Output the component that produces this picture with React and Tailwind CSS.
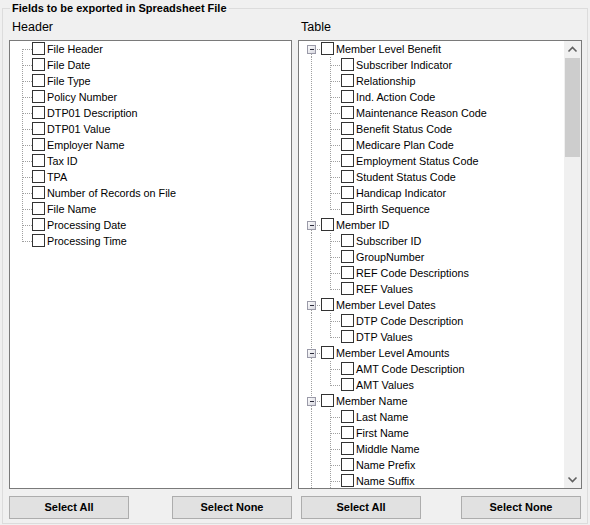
import React from "react";

const leftItems = [
  "File Header",
  "File Date",
  "File Type",
  "Policy Number",
  "DTP01 Description",
  "DTP01 Value",
  "Employer Name",
  "Tax ID",
  "TPA",
  "Number of Records on File",
  "File Name",
  "Processing Date",
  "Processing Time",
];

const rightTree = [
  {
    label: "Member Level Benefit",
    children: [
      "Subscriber Indicator",
      "Relationship",
      "Ind. Action Code",
      "Maintenance Reason Code",
      "Benefit Status Code",
      "Medicare Plan Code",
      "Employment Status Code",
      "Student Status Code",
      "Handicap Indicator",
      "Birth Sequence",
    ],
  },
  {
    label: "Member ID",
    children: ["Subscriber ID", "GroupNumber", "REF Code Descriptions", "REF Values"],
  },
  { label: "Member Level Dates", children: ["DTP Code Description", "DTP Values"] },
  { label: "Member Level Amounts", children: ["AMT Code Description", "AMT Values"] },
  {
    label: "Member Name",
    children: ["Last Name", "First Name", "Middle Name", "Name Prefix", "Name Suffix"],
    more: true,
  },
];

const DOT = { stroke: "#a0a0a0", strokeWidth: 1, strokeDasharray: "1 1", shapeRendering: "crispEdges" };

function CheckBox() {
  return <div className="w-[13px] h-[13px] mt-[1px] border border-[#333333] bg-white shrink-0" />;
}

function Row({ lines, text }) {
  return (
    <div className="flex items-start h-[16px]">
      {lines}
      <CheckBox />
      <span className="ml-[2px] leading-[16px] whitespace-nowrap">{text}</span>
    </div>
  );
}

function LeftLines({ first, last }) {
  return (
    <svg width="22" height="16" className="shrink-0">
      <line x1="12.5" y1={first ? 8 : 0} x2="12.5" y2={last ? 9 : 16} style={DOT} />
      <line x1="13" y1="8.5" x2="22" y2="8.5" style={DOT} />
    </svg>
  );
}

function RootLines({ first }) {
  return (
    <svg width="22" height="16" className="shrink-0">
      {!first && <line x1="12.5" y1="0" x2="12.5" y2="4" style={DOT} />}
      <line x1="12.5" y1="13" x2="12.5" y2="16" style={DOT} />
      <defs>
        <linearGradient id="expg" x1="0" y1="0" x2="1" y2="1">
          <stop offset="0" stopColor="#ffffff" />
          <stop offset="1" stopColor="#d6d6de" />
        </linearGradient>
      </defs>
      <rect x="8.5" y="4.5" width="8" height="8" fill="url(#expg)" stroke="#9a9aa8" strokeWidth="1" shapeRendering="crispEdges" />
      <line x1="10.5" y1="8.5" x2="15" y2="8.5" stroke="#2b2b3b" strokeWidth="1" shapeRendering="crispEdges" />
      <line x1="18" y1="8.5" x2="22" y2="8.5" style={DOT} />
    </svg>
  );
}

function ChildLines({ last }) {
  return (
    <svg width="42" height="16" className="shrink-0">
      <line x1="12.5" y1="0" x2="12.5" y2="16" style={DOT} />
      <line x1="31.5" y1="0" x2="31.5" y2={last ? 9 : 16} style={DOT} />
      <line x1="32" y1="8.5" x2="42" y2="8.5" style={DOT} />
    </svg>
  );
}

function Button({ children }) {
  return (
    <button className="w-[120px] h-[23px] bg-[#e1e1e1] border border-[#adadad] font-bold text-[11px] text-black leading-[21px]">
      {children}
    </button>
  );
}

function Chevron({ up }) {
  return (
    <svg width="17" height="17" viewBox="0 0 17 17">
      <polyline
        points={up ? "4.5,10.5 8.5,6.5 12.5,10.5" : "4.5,6.5 8.5,10.5 12.5,6.5"}
        fill="none"
        stroke="#606060"
        strokeWidth="1.6"
      />
    </svg>
  );
}

export default function App() {
  return (
    <div className="w-[590px] h-[525px] bg-[#f0f0f0] font-['Liberation_Sans',Arial,sans-serif] text-[10.8px] text-black overflow-hidden">
      <fieldset className="ml-[2px] w-[586px] h-[524px] border border-[#dcdcdc] pl-[6px] pr-[4px] pb-[4px]">
        <legend className="ml-[1px] px-[2px] font-bold text-[11px] leading-[16px]">
          Fields to be exported in Spreadsheet File
        </legend>
        <div className="flex gap-[6px]">
          {/* Left column */}
          <div className="flex flex-col w-[283px]">
            <div className="mt-[3px] ml-[3px] h-[16px] text-[12.5px] leading-[16px]">Header</div>
            <div className="mt-[5px] h-[449px] border border-[#7a7a7a] bg-white overflow-hidden">
              {leftItems.map((t, i) => (
                <Row
                  key={t}
                  text={t}
                  lines={<LeftLines first={i === 0} last={i === leftItems.length - 1} />}
                />
              ))}
            </div>
            <div className="mt-[7px] flex justify-between">
              <Button>Select All</Button>
              <Button>Select None</Button>
            </div>
          </div>
          {/* Right column */}
          <div className="flex flex-col w-[284px]">
            <div className="mt-[3px] ml-[3px] h-[16px] text-[12.5px] leading-[16px]">Table</div>
            <div className="mt-[5px] h-[449px] border border-[#7a7a7a] bg-white flex overflow-hidden">
              <div className="flex-1 overflow-hidden">
                {rightTree.map((node, ni) => (
                  <div key={node.label}>
                    <Row text={node.label} lines={<RootLines first={ni === 0} />} />
                    {node.children.map((c, ci) => (
                      <Row
                        key={c}
                        text={c}
                        lines={<ChildLines last={!node.more && ci === node.children.length - 1} />}
                      />
                    ))}
                  </div>
                ))}
              </div>
              <div className="w-[17px] bg-[#f0f0f0] flex flex-col shrink-0">
                <Chevron up />
                <div className="h-[99px] mx-px bg-[#cdcdcd]" />
                <div className="flex-1" />
                <Chevron />
              </div>
            </div>
            <div className="mt-[7px] pl-[3px] pr-[1px] flex justify-between">
              <Button>Select All</Button>
              <Button>Select None</Button>
            </div>
          </div>
        </div>
      </fieldset>
    </div>
  );
}
